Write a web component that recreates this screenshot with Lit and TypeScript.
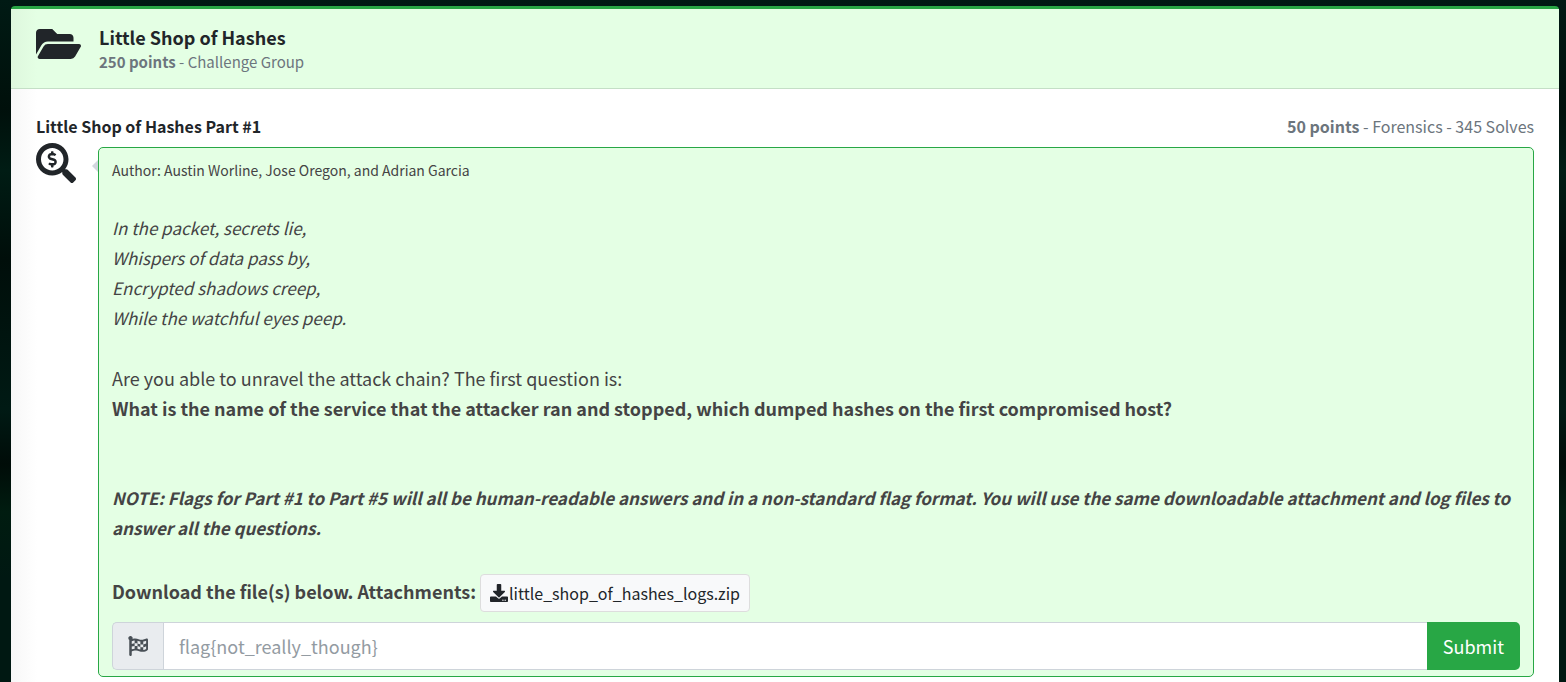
import { LitElement, html, css } from "lit";
import { customElement } from "lit/decorators.js";

const icon = (cls: string, box: string, d: string) => html`
  <svg class=${cls} viewBox=${box} fill="currentColor" aria-hidden="true"><path d=${d}></path></svg>
`;

const FOLDER =
  "M572.694 292.093L500.27 416.248A63.997 63.997 0 0 1 444.989 448H45.025c-18.523 0-30.064-20.093-20.731-36.093l72.424-124.155A64 64 0 0 1 152 256h399.964c18.523 0 30.064 20.093 20.73 36.093zM152 224h328v-48c0-26.51-21.49-48-48-48H272l-64-64H48C21.49 64 0 85.49 0 112v278.046l69.077-118.418C86.214 242.25 117.989 224 152 224z";
const SEARCH =
  "M505.04 442.66l-99.71-99.69c-4.5-4.5-10.6-7-17-7h-16.3c27.6-35.3 44-79.69 44-127.99C416.03 93.09 322.92 0 208.02 0S0 93.09 0 207.98s93.11 207.98 208.02 207.98c48.3 0 92.71-16.4 128.01-44v16.3c0 6.4 2.5 12.5 7 17l99.71 99.69c9.4 9.4 24.6 9.4 33.9 0l28.3-28.3c9.4-9.4 9.4-24.59.1-33.99zm-297.02-90.7c-79.54 0-144-64.34-144-143.98 0-79.53 64.35-143.98 144-143.98 79.54 0 144 64.34 144 143.98 0 79.53-64.35 143.98-144 143.98zm27.11-152.54l-45.01-13.5c-5.16-1.55-8.77-6.78-8.77-12.73 0-7.27 5.3-13.19 11.8-13.19h28.11c4.56 0 8.96 1.29 12.82 3.72 3.24 2.03 7.36 1.91 10.13-.73l11.75-11.21c3.53-3.37 3.33-9.21-.57-12.14-9.1-6.83-20.08-10.77-31.37-11.35V112c0-4.42-3.58-8-8-8h-16c-4.42 0-8 3.58-8 8v16.12c-23.63.63-42.68 20.55-42.68 45.07 0 19.97 12.99 37.81 31.58 43.39l45.01 13.5c5.16 1.55 8.77 6.78 8.77 12.73 0 7.27-5.3 13.19-11.8 13.19h-28.1c-4.56 0-8.96-1.29-12.82-3.72-3.24-2.03-7.36-1.91-10.13.73l-11.75 11.21c-3.53 3.37-3.33 9.21.57 12.14 9.1 6.83 20.08 10.77 31.37 11.35V304c0 4.42 3.58 8 8 8h16c4.42 0 8-3.58 8-8v-16.12c23.63-.63 42.68-20.54 42.68-45.07 0-19.97-12.99-37.81-31.59-43.39z";
const DOWNLOAD =
  "M216 0h80c13.3 0 24 10.7 24 24v168h87.7c17.8 0 26.7 21.5 14.1 34.1L269.7 378.3c-7.5 7.5-19.8 7.5-27.3 0L90.1 226.1c-12.6-12.6-3.7-34.1 14.1-34.1H192V24c0-13.3 10.7-24 24-24zm296 376v112c0 13.3-10.7 24-24 24H24c-13.3 0-24-10.7-24-24V376c0-13.3 10.7-24 24-24h146.7l49 49c20.1 20.1 52.5 20.1 72.6 0l49-49H488c13.3 0 24 10.7 24 24zm-124 88c0-11-9-20-20-20s-20 9-20 20 9 20 20 20 20-9 20-20zm64 0c0-11-9-20-20-20s-20 9-20 20 9 20 20 20 20-9 20-20z";
const FLAG =
  "M243.2 189.9V258c26.1 5.9 49.3 15.6 73.6 22.3v-68.2c-26-5.8-49.4-15.5-73.6-22.2zm223.3-123c-34.3 15.9-76.5 31.9-117 31.9C296 98.8 251.7 64 184.3 64c-25 0-47.3 4.4-68 12 2.8-7.3 4.1-15.2 3.6-23.6C118.1 24 94.8 1.2 66.3 0 34.3-1.3 8 24.3 8 56c0 19 9.5 35.8 24 45.9V488c0 13.3 10.7 24 24 24h16c13.3 0 24-10.7 24-24v-94.4c28.3-12.1 63.6-22.1 114.4-22.1 53.6 0 97.8 34.8 165.2 34.8 48.2 0 86.7-16.3 122.5-40.9 8.7-6 13.8-15.8 13.8-26.4V95.9c.1-23.3-24.2-38.8-45.4-29zM169.6 325.5c-25.8 2.7-50 8.2-73.6 16.6v-70.5c26.2-9.3 47.5-15 73.6-17.4v71.3zM464 191c-23.6 9.8-46.3 19.5-73.6 23.9V286c24.8-3.4 51.4-11.8 73.6-26v70.5c-25.1 16.1-48.5 24.7-73.6 27.1V286c-27 3.7-47.9 1.5-73.6-5.6v67.4c-23.9-7.4-47.3-16.7-73.6-21.3V258c-19.7-4.4-40.8-6.8-73.6-3.8v-70c-22.4 3.1-44.6 10.2-73.6 20.9v-70.5c33.2-12.2 50.1-19.8 73.6-22v71.6c27-3.7 48.4-1.3 73.6 5.7v-67.4c23.7 7.4 47.2 16.7 73.6 21.3v68.4c23.7 5.3 47.6 6.9 73.6 2.7V143c27-4.8 52.3-13.6 73.6-22.5z";

@customElement("app-root")
export class AppRoot extends LitElement {
  static styles = css`
    :host {
      display: flex;
      flex-direction: column;
      box-sizing: border-box;
      min-height: 100vh;
      padding: 6px 7px 0 11px;
      background: linear-gradient(180deg, #001a14 0%, #00100b 16%, #001c14 25%, #000e0a 38%, #001a14 60%, #000c08 68%, #001c10 75%, #001812 85%, #001812 100%);
      font-family: "Noto Sans CJK SC", "Noto Sans", sans-serif;
      font-size: 18px;
      line-height: 30px;
      color: #212529;
    }
    * { box-sizing: border-box; }
    .card {
      flex: 1;
      border-top: 3px solid #28a745;
      border-radius: 4px 4px 0 0;
      background: linear-gradient(90deg, #f7f7f7 0, #fff 26px);
    }
    .head {
      display: flex;
      gap: 18px;
      padding: 16px 25px 14px;
      background: linear-gradient(90deg, #def7dd 0, #e4ffe4 26px);
      border-bottom: 1px solid #c4dfc6;
    }
    .folder { width: 45px; height: 40px; margin-top: -1px; }
    .title { margin: 0; font-size: 18px; line-height: 24px; font-weight: 700; }
    .meta { margin: 0; font-size: 15px; line-height: 25px; color: #6c757d; }
    .body { padding: 24px 25px 5px; }
    .row {
      display: flex;
      justify-content: space-between;
      font-size: 16px;
      line-height: 26px;
    }
    .name { margin: 0; font-size: 16px; font-weight: 700; }
    .info { color: #6c757d; }
    .post { display: flex; gap: 22px; margin-top: 4px; }
    .search { flex: none; width: 40px; height: 40px; }
    .text {
      position: relative;
      flex: 1;
      min-width: 0;
      margin-top: 4px;
      padding: 7px 13px 6px;
      border: 1px solid #28a745;
      border-radius: 5px;
      background: #e4ffe4;
      color: #444;
    }
    .text::before {
      content: "";
      position: absolute;
      left: -7px;
      top: 12px;
      border: 6px solid transparent;
      border-left-width: 0;
      border-right-color: #d2d6de;
    }
    p { margin: 0 0 30px; }
    .author { margin-bottom: 28px; font-size: 14px; }
    .poem, .note { font-size: 17px; }
    .question { margin-bottom: 60px; }
    .note { margin-bottom: 31px; }
    .files { display: flex; gap: 4px; margin-bottom: 10px; line-height: 34px; }
    .file {
      display: flex;
      align-items: center;
      gap: 1px;
      padding: 6px 9px;
      border: 1px solid #ddd;
      border-radius: 4px;
      background: #f8f9fa;
      color: #212529;
      font-size: 16px;
      line-height: 24px;
      text-decoration: none;
    }
    .down { width: 18px; height: 18px; }
    .form { display: flex; height: 48px; }
    .tag {
      display: flex;
      align-items: center;
      padding: 0 15px;
      border: 1px solid #ced4da;
      border-right: 0;
      border-radius: 5px 0 0 5px;
      background: #e9ecef;
      color: #495057;
    }
    .flag { width: 20px; height: 20px; }
    .answer {
      flex: 1;
      min-width: 0;
      padding: 0 15px;
      border: 1px solid #ced4da;
      border-right: 0;
      border-radius: 0;
      background: #fff;
      font: inherit;
      color: #495057;
    }
    .answer::placeholder { color: #939ba2; opacity: 1; }
    .submit {
      padding: 0 16px;
      border: 0;
      border-radius: 0 5px 5px 0;
      background: #28a745;
      color: #fff;
      font: inherit;
    }
  `;

  render() {
    return html`
      <main class="card">
        <header class="head">
          ${icon("folder", "0 0 576 512", FOLDER)}
          <div>
            <h1 class="title">Little Shop of Hashes</h1>
            <p class="meta"><b>250 points</b> - Challenge Group</p>
          </div>
        </header>
        <section class="body">
          <div class="row">
            <h2 class="name">Little Shop of Hashes Part #1</h2>
            <span class="info"><b>50 points</b> - Forensics - 345 Solves</span>
          </div>
          <div class="post">
            ${icon("search", "0 0 512 512", SEARCH)}
            <div class="text">
              <p class="author">Author: Austin Worline, Jose Oregon, and Adrian Garcia</p>
              <p class="poem"><em>In the packet, secrets lie,<br />Whispers of data pass by,<br />Encrypted shadows creep,<br />While the watchful eyes peep.</em></p>
              <p class="question">
                Are you able to unravel the attack chain? The first question is:<br />
                <b>What is the name of the service that the attacker ran and stopped, which dumped hashes on the first compromised host?</b>
              </p>
              <p class="note"><b><em>NOTE: Flags for Part #1 to Part #5 will all be human-readable answers and in a non-standard flag format. You will use the same downloadable attachment and log files to answer all the questions.</em></b></p>
              <div class="files">
                <b>Download the file(s) below. Attachments:</b>
                <a class="file" href="#">${icon("down", "0 0 512 512", DOWNLOAD)}<span>little_shop_of_hashes_logs.zip</span></a>
              </div>
              <form class="form" @submit=${(e: Event) => e.preventDefault()}>
                <label class="tag" for="answer" aria-label="Flag">${icon("flag", "0 0 512 512", FLAG)}</label>
                <input class="answer" id="answer" type="text" placeholder="flag{not_really_though}" />
                <button class="submit" type="submit">Submit</button>
              </form>
            </div>
          </div>
        </section>
      </main>
    `;
  }
}
